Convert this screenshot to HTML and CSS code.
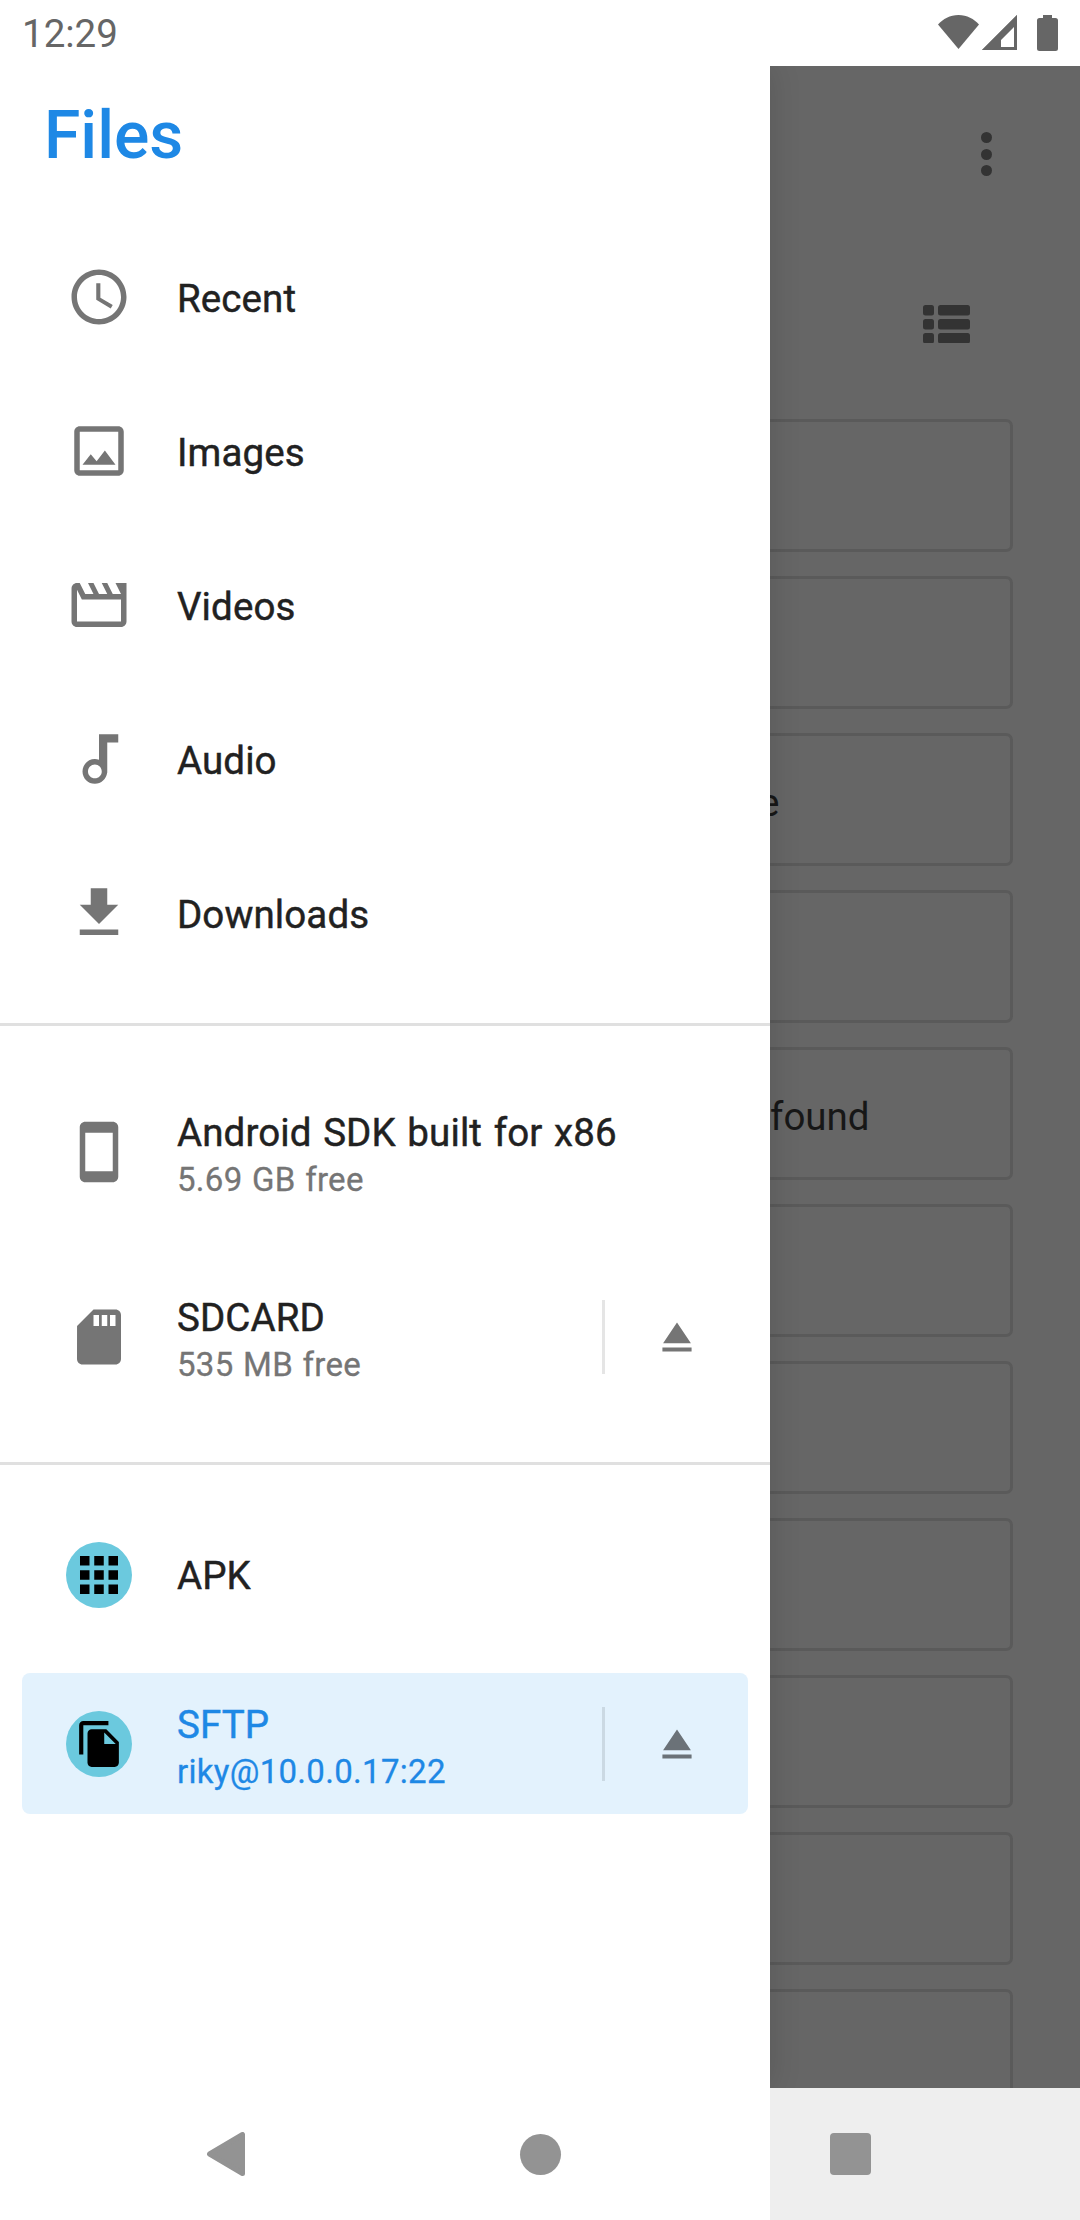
FILE: index.html
```html
<!DOCTYPE html>
<html lang="en">
<head>
  <meta charset="UTF-8">
  <meta name="viewport" content="width=device-width, initial-scale=1.0">
  <title>Files</title>
  <link rel="stylesheet" href="styles.css">
</head>
<body>
  <div class="screen">

    <header class="status-bar">
      <span class="status-time">12:29</span>
      <div class="status-icons">
        <svg class="status-wifi" viewBox="0 0 41 34"><path d="M20.5 34L0 9.5C5 4 12 0 20.5 0S36 4 41 9.5z"/></svg>
        <svg class="status-signal" viewBox="0 0 35 35"><path fill-rule="evenodd" d="M35 0v35H0zM32 12L19 25v7h13z"/><path d="M0 35L35 0v2L3 34h29v1z"/></svg>
        <svg class="status-battery" viewBox="0 0 21 36"><path d="M6 0h9v3h3.500a2.500 2.500 0 0 1 2.500 2.500v28a2.500 2.500 0 0 1-2.500 2.500h-16a2.500 2.500 0 0 1-2.500-2.500v-28a2.500 2.500 0 0 1 2.500-2.500h3.500z"/></svg>
      </div>
    </header>

    <main class="browser">
      <div class="toolbar">
        <div class="overflow-dots"><i></i><i></i><i></i></div>
      </div>
      <div class="view-switch">
        <svg class="list-icon" viewBox="0 0 47 38">
          <rect width="11" height="10.500" rx="2.500"/><rect x="15" width="32" height="10.500" rx="2.500"/>
          <rect y="14" width="11" height="10.500" rx="2.500"/><rect x="15" y="14" width="32" height="10.500" rx="2.500"/>
          <rect y="28" width="11" height="10.500" rx="2.500"/><rect x="15" y="28" width="32" height="10.500" rx="2.500"/>
        </svg>
      </div>
      <div class="cards">
        <div class="card"></div>
        <div class="card"></div>
        <div class="card"><span class="card-name card-name-short">e</span></div>
        <div class="card"></div>
        <div class="card"><span class="card-name">found</span></div>
        <div class="card"></div>
        <div class="card"></div>
        <div class="card"></div>
        <div class="card"></div>
        <div class="card"></div>
        <div class="card"></div>
      </div>
    </main>

    <aside class="drawer">
      <h1 class="drawer-title">Files</h1>

      <ul class="roots">
        <li class="root">
          <svg class="root-icon" viewBox="0 0 24 24"><path d="M11.990 2C6.470 2 2 6.480 2 12s4.470 10 9.990 10C17.520 22 22 17.520 22 12S17.520 2 11.990 2zM12 20c-4.420 0-8-3.580-8-8s3.580-8 8-8 8 3.580 8 8-3.580 8-8 8zm.5-13H11v6l5.250 3.150.75-1.230-4.500-2.670z"/></svg>
          <span class="root-name">Recent</span>
        </li>
        <li class="root">
          <svg class="root-icon" viewBox="0 0 24 24"><path d="M19 5v14H5V5h14m0-2H5c-1.100 0-2 .9-2 2v14c0 1.100.9 2 2 2h14c1.100 0 2-.9 2-2V5c0-1.100-.9-2-2-2zm-4.860 8.860l-3 3.870L9 13.140 6 17h12l-3.860-5.140z"/></svg>
          <span class="root-name">Images</span>
        </li>
        <li class="root">
          <svg class="root-icon" viewBox="0 0 24 24"><path d="M4 6.470L5.760 10H20v8H4V6.470M22 4h-4l2 4h-3l-2-4h-2l2 4h-3l-2-4H8l2 4H7L5 4H4c-1.100 0-1.990.9-1.990 2L2 18c0 1.100.9 2 2 2h16c1.100 0 2-.9 2-2V4z"/></svg>
          <span class="root-name">Videos</span>
        </li>
        <li class="root">
          <svg class="root-icon" viewBox="0 0 24 24"><path d="M12 3v9.280c-.47-.17-.97-.28-1.500-.28C8.010 12 6 14.010 6 16.500S8.010 21 10.500 21c2.310 0 4.200-1.750 4.450-4H15V6h4V3h-7zm-1.500 16C9.120 19 8 17.880 8 16.500s1.120-2.500 2.500-2.500 2.500 1.120 2.500 2.500-1.120 2.500-2.500 2.500z"/></svg>
          <span class="root-name">Audio</span>
        </li>
        <li class="root">
          <svg class="root-icon" viewBox="0 0 24 24"><path d="M19 9h-4V3H9v6H5l7 7 7-7zM5 18v2h14v-2H5z"/></svg>
          <span class="root-name">Downloads</span>
        </li>
      </ul>

      <hr class="drawer-divider">

      <ul class="roots roots-storage">
        <li class="root root-tall">
          <svg class="root-icon" viewBox="0 0 24 24"><path d="M17 1.010L7 1c-1.100 0-2 .9-2 2v18c0 1.100.9 2 2 2h10c1.100 0 2-.9 2-2V3c0-1.100-.9-1.990-2-1.990zM17 19H7V5h10v14z"/></svg>
          <div class="root-text">
            <span class="root-name">Android SDK built for x86</span>
            <span class="root-sub">5.69 GB free</span>
          </div>
        </li>
        <li class="root root-tall">
          <svg class="root-icon" viewBox="0 0 24 24"><path d="M18 2h-8L4.020 8 4 20c0 1.100.9 2 2 2h12c1.100 0 2-.9 2-2V4c0-1.100-.9-2-2-2zm-6 6h-2V4h2v4zm3 0h-2V4h2v4zm3 0h-2V4h2v4z"/></svg>
          <div class="root-text">
            <span class="root-name">SDCARD</span>
            <span class="root-sub">535 MB free</span>
          </div>
          <div class="eject">
            <svg class="eject-icon" viewBox="0 0 24 24"><path d="M5 17h14v2H5zm7-12L5.330 15h13.340z"/></svg>
          </div>
        </li>
      </ul>

      <hr class="drawer-divider">

      <ul class="roots roots-apps">
        <li class="root root-app">
          <span class="app-badge">
            <svg class="app-grid" viewBox="4 4 16 16"><path d="M4 8h4V4H4v4zm6 12h4v-4h-4v4zm-6 0h4v-4H4v4zm0-6h4v-4H4v4zm6 0h4v-4h-4v4zm6-10v4h4V4h-4zm-6 4h4V4h-4v4zm6 6h4v-4h-4v4zm0 6h4v-4h-4v4z"/></svg>
          </span>
          <span class="root-name">APK</span>
        </li>
        <li class="root root-app root-active">
          <span class="app-badge">
            <svg class="app-copy" viewBox="2 1 19 22"><path d="M16 1H4c-1.100 0-2 .9-2 2v14h2V3h12V1zm-1 4l6 6v10c0 1.100-.9 2-2 2H7.990C6.890 23 6 22.100 6 21l.01-14c0-1.100.89-2 1.990-2h7zm-1 7h5.500L14 6.500V12z"/></svg>
          </span>
          <div class="root-text">
            <span class="root-name">SFTP</span>
            <span class="root-sub">riky@10.0.0.17:22</span>
          </div>
          <div class="eject">
            <svg class="eject-icon" viewBox="0 0 24 24"><path d="M5 17h14v2H5zm7-12L5.330 15h13.340z"/></svg>
          </div>
        </li>
      </ul>
    </aside>

    <footer class="nav-bar">
      <div class="nav-left">
        <svg class="nav-back" viewBox="0 0 38 44"><path d="M35.500 2.500v39L2.500 22z"/></svg>
        <span class="nav-home"></span>
      </div>
      <div class="nav-right">
        <span class="nav-recents"></span>
      </div>
    </footer>

  </div>
</body>
</html>
```

FILE: styles.css
```css
* {
  box-sizing: border-box;
}

body {
  margin: 0;
  font-family: Roboto, "Noto Sans", sans-serif;
}

.screen {
  position: relative;
  display: flex;
  flex-direction: column;
  width: 1080px;
  height: 2220px;
  overflow: hidden;
  background-color: #666;
}

/* status bar */
.status-bar {
  position: relative;
  z-index: 3;
  display: flex;
  align-items: center;
  justify-content: space-between;
  height: 66px;
  padding: 0 22px 0 22px;
  background-color: #fff;
}
.status-time {
  font-size: 38.5px;
  color: #666;
}
.status-icons {
  display: flex;
  align-items: flex-start;
  height: 36px;
}
.status-icons svg {
  display: block;
  fill: #666;
}
.status-wifi {
  width: 41px;
  height: 34px;
}
.status-signal {
  width: 35px;
  height: 35px;
  margin-left: 3px;
}
.status-battery {
  width: 21px;
  height: 36px;
  margin-left: 20px;
}

/* file list behind the drawer */
.browser {
  flex: 1;
  min-height: 0;
  overflow: hidden;
  padding: 0 67px 0 66px;
}
.toolbar {
  display: flex;
  justify-content: flex-end;
  height: 184px;
  padding: 66px 21px 0 0;
}
.overflow-dots {
  display: flex;
  flex-direction: column;
  gap: 5.500px;
}
.overflow-dots i {
  display: block;
  width: 11px;
  height: 11px;
  border-radius: 50%;
  background-color: #333;
}
.view-switch {
  display: flex;
  justify-content: flex-end;
  height: 169px;
  padding: 55px 43px 0 0;
}
.list-icon {
  display: block;
  width: 47px;
  height: 38px;
  fill: #333;
}
.cards {
  display: flex;
  flex-direction: column;
  gap: 24px;
}
.card {
  display: flex;
  flex-shrink: 0;
  align-items: center;
  height: 133px;
  border: 3px solid #5a5a5a;
  border-radius: 7px;
}
.card-name {
  margin-left: 701px;
  padding-top: 5px;
  font-size: 38.5px;
  color: #171717;
}
.card-name-short {
  margin-left: 690px;
}

/* drawer */
.drawer {
  position: absolute;
  top: 66px;
  left: 0;
  bottom: 132px;
  z-index: 2;
  width: 770px;
  background-color: #fff;
  box-shadow: 0 0 30px rgba(0, 0, 0, 0.14);
}
.drawer-title {
  height: 154px;
  margin: 0;
  padding: 24px 0 0 44px;
  font-size: 66px;
  font-weight: 500;
  line-height: 92px;
  color: #1e88e5;
}
.roots {
  margin: 0;
  padding: 0;
  list-style: none;
}
.roots-storage {
  margin-top: 33px;
}
.roots-apps {
  margin-top: 25px;
}
.root {
  display: flex;
  align-items: center;
  height: 154px;
  padding-left: 66px;
}
.root-tall {
  height: 185px;
}
.root-app {
  height: 169px;
}
.root-icon {
  display: block;
  flex-shrink: 0;
  width: 66px;
  height: 66px;
  fill: #757575;
}
.root-name {
  display: block;
  margin-left: 45px;
  font-size: 38.5px;
  line-height: 46px;
  letter-spacing: 0.1px;
  word-spacing: 2px;
  color: #212121;
  -webkit-text-stroke: 0.45px currentColor;
}
.root > .root-name {
  padding-top: 3px;
}
.root-text {
  flex: 1;
  padding-top: 9px;
}
.root-sub {
  display: block;
  margin-top: 2px;
  margin-left: 45px;
  font-size: 33px;
  line-height: 44px;
  letter-spacing: 0.3px;
  word-spacing: 1px;
  color: #757575;
  -webkit-text-stroke: 0.3px currentColor;
}
.drawer-divider {
  height: 3px;
  margin: 33px 0 0;
  border: none;
  background-color: #e0e0e0;
}
.eject {
  display: flex;
  align-items: center;
  justify-content: center;
  width: 147px;
  height: 74px;
  border-left: 3px solid rgba(0, 0, 0, 0.1);
  margin-right: 21px;
}
.eject-icon {
  display: block;
  width: 50px;
  height: 50px;
  fill: #757575;
}
.app-badge {
  display: flex;
  flex-shrink: 0;
  align-items: center;
  justify-content: center;
  width: 66px;
  height: 66px;
  border-radius: 50%;
  background-color: #6bc9de;
}
.app-grid {
  display: block;
  width: 38px;
  height: 38px;
}
.app-copy {
  display: block;
  width: 40px;
  height: 46px;
}
.root-active {
  height: 141px;
  margin: 14px 22px 0;
  padding-left: 44px;
  border-radius: 8px;
  background-color: #e3f2fd;
}
.root-active .root-name,
.root-active .root-sub {
  color: #1e88e5;
}
.root-active .eject {
  margin-right: -1px;
}
.root-active .eject-icon {
  fill: #6b7278;
}

/* navigation bar */
.nav-bar {
  position: relative;
  z-index: 3;
  display: flex;
  flex-shrink: 0;
  height: 132px;
}
.nav-left {
  display: flex;
  align-items: center;
  width: 770px;
  padding-left: 207px;
  background-color: #fff;
}
.nav-right {
  display: flex;
  flex: 1;
  align-items: center;
  padding-left: 60px;
  background-color: #eee;
}
.nav-back {
  display: block;
  width: 38px;
  height: 44px;
  fill: #939393;
  stroke: #939393;
  stroke-width: 5;
  stroke-linejoin: round;
}
.nav-home {
  width: 41px;
  height: 41px;
  margin-left: 275px;
  border-radius: 50%;
  background-color: #939393;
}
.nav-recents {
  width: 41px;
  height: 42px;
  border-radius: 4px;
  background-color: #939393;
}
```
